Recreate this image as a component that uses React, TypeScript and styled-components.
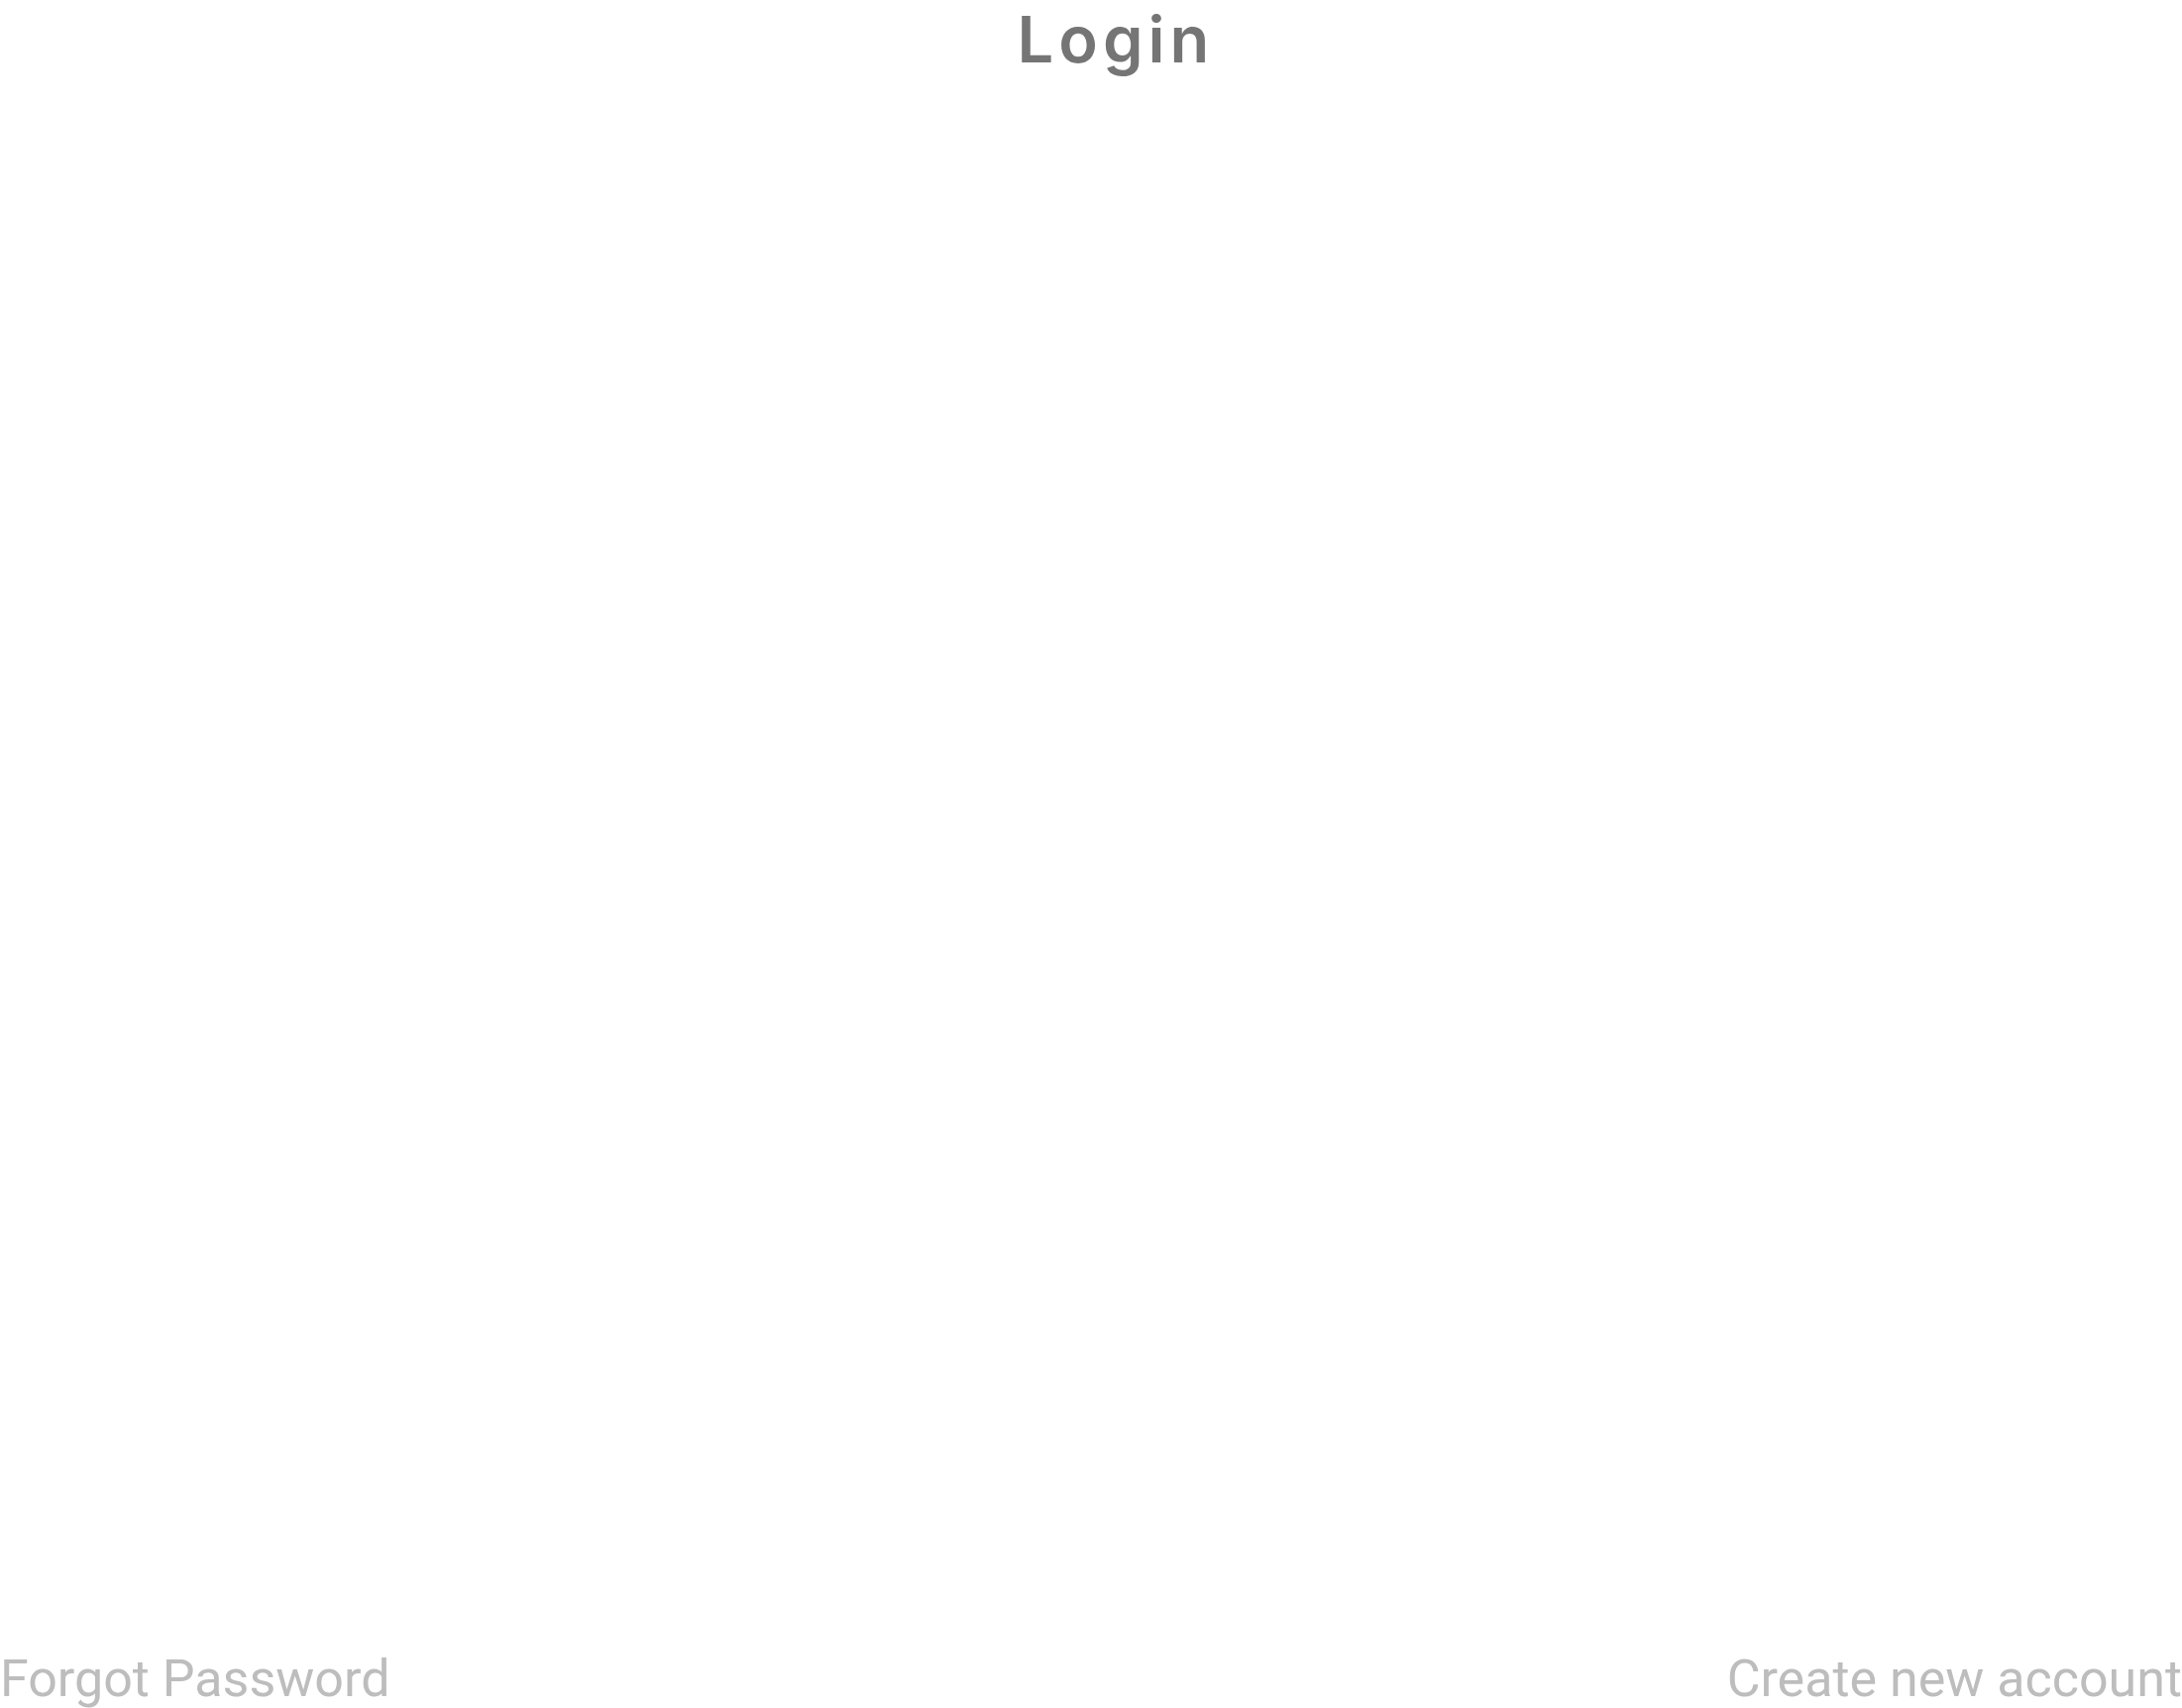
import React from 'react';
import styled, {createGlobalStyle} from 'styled-components';

const GlobalStyle = createGlobalStyle`
  html, body {
    margin: 0;
    padding: 0;
    background: #ffffff;
  }
  #root {
    height: 100vh;
  }
`;

const Page = styled.div`
  display: flex;
  flex-direction: column;
  justify-content: space-between;
  height: 100vh;
  box-sizing: border-box;
  overflow: hidden;
`;

const Title = styled.h1`
  margin: 0;
  padding: 0 0 0 50px;
  text-align: center;
  font-family: Inter, 'Noto Sans', sans-serif;
  font-weight: 600;
  font-size: 65px;
  line-height: 80px;
  color: #757575;
  letter-spacing: 5px;
`;

const Footer = styled.div`
  display: flex;
  justify-content: space-between;
  align-items: flex-end;
`;

const FooterLink = styled.a`
  font-family: Roboto, 'Liberation Sans', sans-serif;
  font-size: 52px;
  line-height: 58px;
  color: #bdbdbd;
  text-decoration: none;
  cursor: pointer;
`;

export default function App() {
  return (
    <>
      <GlobalStyle />
      <Page>
        <Title>Login</Title>
        <Footer>
          <FooterLink>Forgot Password</FooterLink>
          <FooterLink>Create new account</FooterLink>
        </Footer>
      </Page>
    </>
  );
}
